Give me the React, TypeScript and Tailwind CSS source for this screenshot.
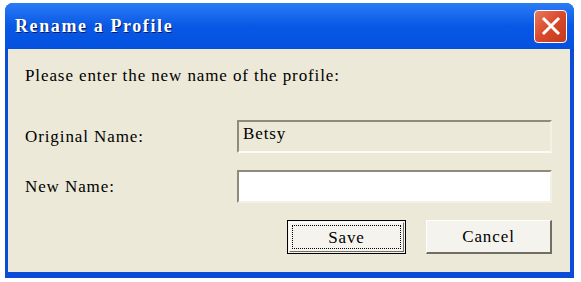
import React from "react";

export default function App() {
  const serif = { fontFamily: '"Liberation Serif", "Times New Roman", serif' };
  return (
    <div className="w-[581px] h-[282px] bg-white overflow-hidden" style={serif}>
      <div className="ml-[5px] mt-[3px] w-[569px] h-[275px] rounded-t-[8px] bg-[#0A4BD8] flex flex-col">
        {/* Title bar */}
        <div className="h-[46px] rounded-t-[8px] bg-gradient-to-b from-[#2A7BF5] via-[#0858E6] to-[#0451DE] flex items-center justify-between pl-[10px] pr-[7px]">
          <span
            className="text-white font-bold text-[18px] tracking-[1.6px]"
            style={{ textShadow: "1px 1px 0 #0a1a60" }}
          >
            Rename a Profile
          </span>
          <div className="w-[33px] h-[33px] rounded-[4px] border border-white bg-gradient-to-br from-[#E9775A] via-[#D9482A] to-[#C03A1C] flex items-center justify-center">
            <svg width="20" height="20" viewBox="0 0 20 20">
              <path d="M3 3 L17 17 M17 3 L3 17" stroke="white" strokeWidth="3" strokeLinecap="square" />
            </svg>
          </div>
        </div>
        {/* Client */}
        <div className="flex-1 ml-[3px] mr-[4px] mb-[6px] bg-[#ECE9D8] text-[17px] tracking-[0.9px] text-black flex flex-col pl-[17px] pr-[18px] pt-[17px]">
          <div className="h-[20px] leading-[20px]">Please enter the new name of the profile:</div>
          <div className="flex items-center mt-[34px]">
            <div className="w-[212px]">Original Name:</div>
            <div className="w-[315px] h-[33px] border-t-2 border-l-2 border-t-[#8E8B7E] border-l-[#8E8B7E] border-b-2 border-r-2 border-b-[#FBFAF6] border-r-[#F3F1E6] px-[4px] pt-[1px] leading-[22px]">
              Betsy
            </div>
          </div>
          <div className="flex items-center mt-[17px]">
            <div className="w-[212px]">New Name:</div>
            <div className="w-[315px] h-[33px] bg-white border-t-2 border-l-2 border-t-[#8E8B7E] border-l-[#8E8B7E] border-b-2 border-r-2 border-b-[#F3F1E6] border-r-[#F3F1E6]" />
          </div>
          <div className="flex justify-end mt-[17px] gap-[20px]">
            <div className="w-[119px] h-[34px] border border-black bg-[#F4F3EE] p-[1px]">
              <div className="h-full border-t border-l border-t-white border-l-white border-b border-r border-b-[#716F64] border-r-[#716F64] p-[2px]">
                <div className="h-full border border-dotted border-black flex items-center justify-center leading-none">
                  Save
                </div>
              </div>
            </div>
            <div className="w-[126px] h-[34px] bg-[#F4F3EE] border-t border-l border-t-white border-l-white border-b-2 border-r-2 border-b-[#716F64] border-r-[#716F64] flex items-center justify-center">
              Cancel
            </div>
          </div>
        </div>
      </div>
    </div>
  );
}
